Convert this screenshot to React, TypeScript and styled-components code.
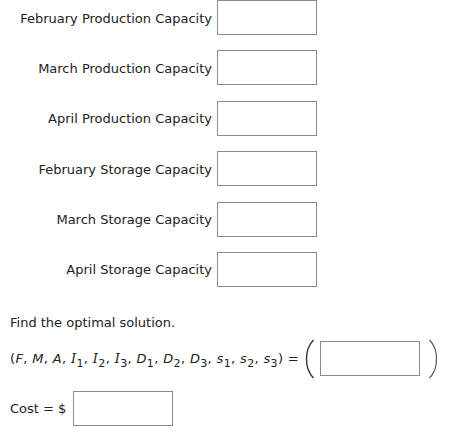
import React from "react";
import styled, { createGlobalStyle } from "styled-components";

const GlobalStyle = createGlobalStyle`
    body {
        margin: 0;
        background: #fff;
        font-family: "DejaVu Sans", Verdana, sans-serif;
        font-size: 13px;
        color: #222;
    }
`;

const Page = styled.div`
    padding: 0 10px;
`;

const CapacityGrid = styled.div`
    display: grid;
    grid-template-columns: 202px 100px;
    column-gap: 5px;
    row-gap: 15.4px;
    align-items: center;
`;

const Label = styled.label`
    text-align: right;
    white-space: nowrap;
    padding-top: 1px;
`;

const Box = styled.div<{ $width?: number }>`
    box-sizing: border-box;
    width: ${(p) => p.$width ?? 100}px;
    height: 35px;
    border: 1px solid #8a8a8a;
    background: #fff;
`;

const Prompt = styled.p`
    margin: 28px 0 0;
    line-height: 16px;
`;

const Equation = styled.div`
    display: flex;
    align-items: center;
    margin-top: 8px;
    height: 40px;
`;

const Tuple = styled.span`
    white-space: nowrap;
    letter-spacing: 0.35px;
`;

const Var = styled.i<{ $serif?: boolean }>`
    font-style: italic;
    font-family: ${(p) => (p.$serif ? '"DejaVu Serif", serif' : "inherit")};
`;

const Sub = styled.sub`
    font-size: 11px;
    vertical-align: -4px;
    line-height: 0;
`;

const Paren = styled.svg`
    display: block;
    flex: none;
`;

const Spacer = styled.span<{ $w: number }>`
    flex: none;
    width: ${(p) => p.$w}px;
`;

const CostRow = styled.div`
    display: flex;
    align-items: center;
    gap: 7px;
    margin-top: 12px;
`;

const capacities = [
    "February Production Capacity",
    "March Production Capacity",
    "April Production Capacity",
    "February Storage Capacity",
    "March Storage Capacity",
    "April Storage Capacity",
];

const vars: [string, string][] = [
    ["I", "1"],
    ["I", "2"],
    ["I", "3"],
    ["D", "1"],
    ["D", "2"],
    ["D", "3"],
    ["s", "1"],
    ["s", "2"],
    ["s", "3"],
];

const LeftParen = () => (
    <Paren width="10" height="40" viewBox="0 0 10 40">
        <path d="M8.5 1 Q1.5 8 1.5 20 Q1.5 32 8.5 39" fill="none" stroke="#333" strokeWidth="1.4" />
    </Paren>
);

const RightParen = () => (
    <Paren width="10" height="40" viewBox="0 0 10 40">
        <path d="M1.5 1 Q8.5 8 8.5 20 Q8.5 32 1.5 39" fill="none" stroke="#555" strokeWidth="1.2" />
    </Paren>
);

export default function App() {
    return (
        <Page>
            <GlobalStyle />
            <CapacityGrid>
                {capacities.map((c) => (
                    <React.Fragment key={c}>
                        <Label>{c}</Label>
                        <Box />
                    </React.Fragment>
                ))}
            </CapacityGrid>

            <Prompt>Find the optimal solution.</Prompt>

            <Equation>
                <Tuple>
                    (<Var>F</Var>, <Var>M</Var>, <Var>A</Var>
                    {vars.map(([v, s], i) => (
                        <React.Fragment key={i}>
                            , <Var $serif={v === "I"}>{v}</Var>
                            <Sub>{s}</Sub>
                        </React.Fragment>
                    ))}
                    ) =
                </Tuple>
                <Spacer $w={6} />
                <LeftParen />
                <Spacer $w={5} />
                <Box $width={100} />
                <Spacer $w={8} />
                <RightParen />
            </Equation>

            <CostRow>
                <span>Cost = $</span>
                <Box $width={100} />
            </CostRow>
        </Page>
    );
}
